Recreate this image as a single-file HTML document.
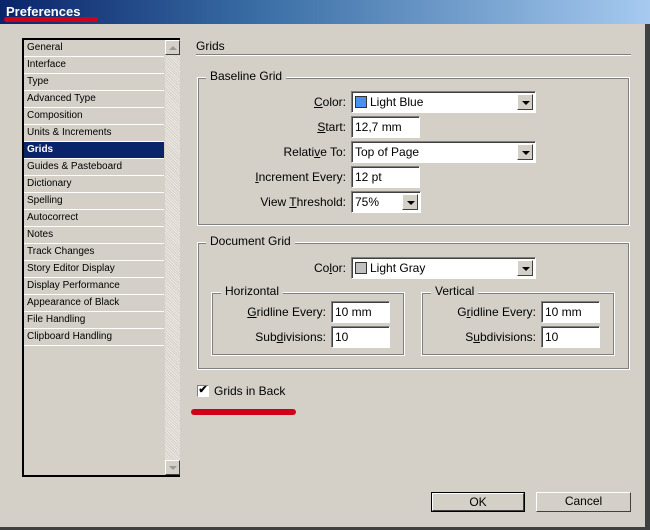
<!DOCTYPE html>
<html><head><style>
*{box-sizing:border-box;margin:0;padding:0}
body{width:650px;height:530px;background:#d4d0c8;font-family:"Liberation Sans",sans-serif;font-size:11px;color:#000;position:relative;overflow:hidden}
.a{position:absolute}
.title{left:0;top:0;width:650px;height:24px;background:linear-gradient(90deg,#0a246a,#3a6ea5 40%,#a6caf0)}
.t{color:#fff;font-weight:bold;font-size:13px;left:6px;top:4px}
.red{background:#d0021b;border-radius:3px}
.list{left:22px;top:38px;width:158px;height:439px;border:2px solid #000;background:#d4d0c8}
.it{position:absolute;left:0;width:140px;height:17px;border-bottom:1px solid #fff;padding-left:3px;line-height:16px;font-size:10px}
.sel{background:#0a246a;color:#fff;font-weight:bold}
.sb{left:141px;top:0;width:15px;height:435px;background-color:#eeeae4;background-image:repeating-linear-gradient(45deg,#d4d0c8 0 1px,transparent 1px 2px)}
.btn3{background:#d4d0c8;border:1px solid;border-color:#fff #404040 #404040 #fff}
.grp{border:1px solid #fff;outline:1px solid #808080;outline-offset:-2px}
.lg{background:#d4d0c8;padding:0 4px;font-size:12px}
.lbl{text-align:right;font-size:12px;width:200px}
.in{background:#fff;border:1px solid;border-color:#808080 #fff #fff #808080;box-shadow:inset 1px 1px 0 #404040;font-size:12px;padding:3px 3px;height:22px}
.dd{position:absolute;right:2px;top:2px;width:16px;height:16px}
.dd:after{content:"";position:absolute;left:4px;top:6px;border:4px solid transparent;border-top:4px solid #000;border-bottom:0}
.sw{display:inline-block;width:12px;height:12px;border:1px solid #333;vertical-align:-2px;margin-right:3px}
.b{border:1px solid #000;font-size:12px;text-align:center;line-height:17px}
</style></head><body>
<div class="a title"></div>
<div class="a t">Preferences</div>
<div class="a red" style="left:4px;top:17px;width:94px;height:5px"></div>
<div class="a" style="left:645px;top:24px;width:5px;height:506px;background:#404040"></div>
<div class="a" style="left:0;top:527px;width:650px;height:3px;background:#404040"></div>

<div class="a list">
<div class="it" style="top:0">General</div>
<div class="it" style="top:17px">Interface</div>
<div class="it" style="top:34px">Type</div>
<div class="it" style="top:51px">Advanced Type</div>
<div class="it" style="top:68px">Composition</div>
<div class="it" style="top:85px">Units &amp; Increments</div>
<div class="it sel" style="top:102px">Grids</div>
<div class="it" style="top:119px">Guides &amp; Pasteboard</div>
<div class="it" style="top:136px">Dictionary</div>
<div class="it" style="top:153px">Spelling</div>
<div class="it" style="top:170px">Autocorrect</div>
<div class="it" style="top:187px">Notes</div>
<div class="it" style="top:204px">Track Changes</div>
<div class="it" style="top:221px">Story Editor Display</div>
<div class="it" style="top:238px">Display Performance</div>
<div class="it" style="top:255px">Appearance of Black</div>
<div class="it" style="top:272px">File Handling</div>
<div class="it" style="top:289px">Clipboard Handling</div>
<div class="a sb"></div>
<div class="a btn3" style="left:141px;top:0;width:15px;height:15px"><div style="position:absolute;left:3px;top:5px;border:4px solid transparent;border-bottom:4px solid #999;border-top:0"></div></div>
<div class="a btn3" style="left:141px;top:420px;width:15px;height:15px"><div style="position:absolute;left:3px;top:5px;border:4px solid transparent;border-top:4px solid #999;border-bottom:0"></div></div>
</div>

<div class="a" style="left:196px;top:39px;font-size:12px">Grids</div>
<div class="a" style="left:196px;top:54px;width:435px;height:2px;border-top:1px solid #808080;border-bottom:1px solid #fff"></div>

<div class="a grp" style="left:197px;top:77px;width:433px;height:149px"></div>
<div class="a lg" style="left:206px;top:69px">Baseline Grid</div>
<div class="a lbl" style="left:146px;top:95px"><u>C</u>olor:</div>
<div class="a in" style="left:351px;top:91px;width:185px"><span class="sw" style="background:#4a90f0"></span>Light Blue<div class="dd btn3"></div></div>
<div class="a lbl" style="left:146px;top:120px"><u>S</u>tart:</div>
<div class="a in" style="left:351px;top:116px;width:69px">12,7 mm</div>
<div class="a lbl" style="left:146px;top:145px">Relati<u>v</u>e To:</div>
<div class="a in" style="left:351px;top:141px;width:185px">Top of Page<div class="dd btn3"></div></div>
<div class="a lbl" style="left:146px;top:170px"><u>I</u>ncrement Every:</div>
<div class="a in" style="left:351px;top:166px;width:69px">12 pt</div>
<div class="a lbl" style="left:146px;top:195px">View <u>T</u>hreshold:</div>
<div class="a in" style="left:351px;top:191px;width:70px">75%<div class="dd btn3"></div></div>

<div class="a grp" style="left:197px;top:242px;width:433px;height:128px"></div>
<div class="a lg" style="left:206px;top:234px">Document Grid</div>
<div class="a lbl" style="left:146px;top:261px">Co<u>l</u>or:</div>
<div class="a in" style="left:351px;top:257px;width:185px"><span class="sw" style="background:#c0c0c0"></span>Light Gray<div class="dd btn3"></div></div>

<div class="a grp" style="left:211px;top:292px;width:194px;height:64px"></div>
<div class="a lg" style="left:221px;top:284px">Horizontal</div>
<div class="a lbl" style="left:126px;top:305px"><u>G</u>ridline Every:</div>
<div class="a in" style="left:331px;top:301px;width:59px">10 mm</div>
<div class="a lbl" style="left:126px;top:330px">Sub<u>d</u>ivisions:</div>
<div class="a in" style="left:331px;top:326px;width:59px">10</div>

<div class="a grp" style="left:421px;top:292px;width:194px;height:64px"></div>
<div class="a lg" style="left:431px;top:284px">Vertical</div>
<div class="a lbl" style="left:336px;top:305px">G<u>r</u>idline Every:</div>
<div class="a in" style="left:541px;top:301px;width:59px">10 mm</div>
<div class="a lbl" style="left:336px;top:330px">S<u>u</u>bdivisions:</div>
<div class="a in" style="left:541px;top:326px;width:59px">10</div>

<div class="a" style="left:197px;top:385px;width:12px;height:12px;background:#fff;border:1px solid;border-color:#808080 #fff #fff #808080;font-size:11px;line-height:9px;text-align:center;font-weight:bold">✔</div>
<div class="a" style="left:214px;top:384px;font-size:12px">Grids in Back</div>
<div class="a red" style="left:191px;top:409px;width:105px;height:6px"></div>

<div class="a b" style="left:431px;top:492px;width:94px;height:20px"><div class="btn3" style="height:18px">OK</div></div>
<div class="a btn3" style="left:536px;top:492px;width:95px;height:20px;font-size:12px;text-align:center;line-height:17px">Cancel</div>
</body></html>
